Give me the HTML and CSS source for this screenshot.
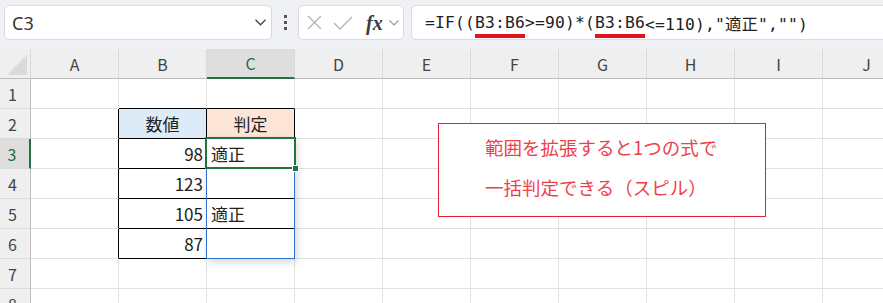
FILE: index.html
```html
<!DOCTYPE html>
<html lang="ja">
<head>
    <meta charset="UTF-8">
    <title>スピル 判定</title>
    <link rel="stylesheet" href="styles.css">
</head>
<body>
    <div class="toolbar">
        <div class="namebox">
            <span>C3</span>
            <svg width="11" height="7" viewBox="0 0 11 7"><polyline points="0.5,0.8 5.5,5.8 10.5,0.8" fill="none" stroke="#444" stroke-width="1.3"/></svg>
        </div>
        <div class="kebab"><i></i><i></i><i></i></div>
        <div class="fxbox">
            <svg class="ic-x" width="15" height="15" viewBox="0 0 15 15"><path d="M1 1L14 14M14 1L1 14" stroke="#b4b4b4" stroke-width="1.4"/></svg>
            <svg class="ic-ok" width="20" height="14" viewBox="0 0 20 14"><polyline points="1,7 7,13 19,1" fill="none" stroke="#b4b4b4" stroke-width="1.4"/></svg>
            <span class="fx">fx</span>
            <svg class="ic-dd" width="10" height="6" viewBox="0 0 10 6"><polyline points="0.5,0.5 5,5 9.5,0.5" fill="none" stroke="#999" stroke-width="1.1"/></svg>
        </div>
        <div class="formula">=IF((<span class="mark">B3:B6</span>&gt;=90)*(<span class="mark">B3:B6</span>&lt;=110),"適正","")</div>
    </div>

    <div class="sheet">
        <div class="grid">
            <!-- column headers -->
            <div class="ch corner"><svg width="20" height="20" viewBox="0 0 20 20"><polygon points="20,0 20,20 0,20" fill="#dadada"/></svg></div>
            <div class="ch">A</div>
            <div class="ch">B</div>
            <div class="ch sel">C</div>
            <div class="ch">D</div>
            <div class="ch">E</div>
            <div class="ch">F</div>
            <div class="ch">G</div>
            <div class="ch">H</div>
            <div class="ch">I</div>
            <div class="ch">J</div>

            <!-- row 1 -->
            <div class="rh">1</div>
            <div></div>
            <div class="bk-b"></div>
            <div class="bk-b"></div>
            <div></div><div></div><div></div><div></div><div></div><div></div><div></div>

            <!-- row 2 -->
            <div class="rh">2</div>
            <div class="bk-r"></div>
            <div class="bk-r bk-b head-blue">数値</div>
            <div class="bk-r bk-b head-peach">判定</div>
            <div></div><div></div><div></div><div></div><div></div><div></div><div></div>

            <!-- row 3 -->
            <div class="rh sel">3</div>
            <div class="bk-r"></div>
            <div class="bk-r bk-b num">98</div>
            <div class="bk-r bk-b">適正</div>
            <div></div><div></div><div></div><div></div><div></div><div></div><div></div>

            <!-- row 4 -->
            <div class="rh">4</div>
            <div class="bk-r"></div>
            <div class="bk-r bk-b num">123</div>
            <div class="bk-r bk-b"></div>
            <div></div><div></div><div></div><div></div><div></div><div></div><div></div>

            <!-- row 5 -->
            <div class="rh">5</div>
            <div class="bk-r"></div>
            <div class="bk-r bk-b num">105</div>
            <div class="bk-r bk-b">適正</div>
            <div></div><div></div><div></div><div></div><div></div><div></div><div></div>

            <!-- row 6 -->
            <div class="rh">6</div>
            <div class="bk-r"></div>
            <div class="bk-r bk-b num">87</div>
            <div class="bk-r bk-b"></div>
            <div></div><div></div><div></div><div></div><div></div><div></div><div></div>

            <!-- row 7 -->
            <div class="rh">7</div>
            <div></div><div></div><div></div><div></div><div></div><div></div><div></div><div></div><div></div><div></div>

            <!-- row 8 -->
            <div class="rh">8</div>
            <div></div><div></div><div></div><div></div><div></div><div></div><div></div><div></div><div></div><div></div>
        </div>

        <!-- spill range and active cell drawn over the grid -->
        <div class="spill"></div>
        <div class="active"></div>
        <div class="handle"></div>

        <div class="note">
            <p>範囲を拡張すると1つの式で</p>
            <p>一括判定できる（スピル）</p>
        </div>
    </div>
</body>
</html>
```

FILE: styles.css
```css
* {
    margin: 0;
    padding: 0;
    box-sizing: border-box;
}

body {
    width: 883px;
    height: 303px;
    overflow: hidden;
    background: #fff;
    font-family: "Noto Sans CJK JP", "Noto Sans", sans-serif;
    color: #222;
}

/* formula bar */
.toolbar {
    height: 49px;
    background: #eff1f4;
    display: flex;
    align-items: flex-start;
    padding: 5px 0 0 4px;
}

.namebox,
.fxbox,
.formula {
    height: 35px;
    background: #fff;
    border: 1px solid #d9dbde;
    border-radius: 5px;
    display: flex;
    align-items: center;
}

.namebox {
    width: 268px;
    flex-shrink: 0;
    justify-content: space-between;
    padding: 0 5px 0 7px;
    font-family: "Noto Sans", sans-serif;
    font-size: 18px;
    color: #333;
}

.kebab {
    width: 26px;
    height: 35px;
    flex-shrink: 0;
    display: flex;
    flex-direction: column;
    align-items: center;
    justify-content: center;
    gap: 3px;
}

.kebab i {
    display: block;
    width: 3px;
    height: 3px;
    background: #555;
}

.fxbox {
    width: 106px;
    flex-shrink: 0;
    padding-left: 8px;
}

.ic-ok {
    margin-left: 11px;
}

.fx {
    margin-left: 13px;
    font-family: "Liberation Serif", serif;
    font-style: italic;
    font-weight: bold;
    font-size: 20px;
    color: #3a3a3a;
    line-height: 1;
}

.ic-dd {
    margin-left: 6px;
}

.formula {
    flex: 1;
    margin: 0 -12px 0 7px;
    padding-left: 13px;
    font-family: "DejaVu Sans Mono", "Noto Sans CJK JP", monospace;
    font-size: 16.3px;
    letter-spacing: 0.2px;
    color: #222;
    white-space: pre;
}

.mark {
    text-decoration: underline;
    text-decoration-color: #e3131b;
    text-decoration-thickness: 4px;
    text-underline-offset: 6px;
}

/* worksheet */
.sheet {
    position: relative;
}

.grid {
    display: grid;
    grid-template-columns: 31px repeat(10, 88px);
    grid-template-rows: repeat(9, 30px);
}

.grid > div {
    border-right: 1px solid #e1e1e1;
    border-bottom: 1px solid #e1e1e1;
    display: flex;
    align-items: center;
    padding: 0 4px;
    font-size: 17px;
}

.grid .ch {
    background: #efefef;
    justify-content: center;
    border-right-color: #d9d9d9;
    border-bottom-color: #bdbdbd;
    color: #444;
    font-size: 16px;
}

.grid .corner {
    justify-content: flex-end;
    align-items: flex-end;
    padding: 0 3px 3px 0;
}

.grid .rh {
    background: #efefef;
    justify-content: center;
    padding: 0 5px 0 0;
    border-right-color: #bdbdbd;
    border-bottom-color: #dadada;
    color: #444;
    font-size: 16px;
}

.grid .ch.sel {
    background: #dedede;
    color: #1d6b40;
    border-bottom: 2px solid #217346;
}

.grid .rh.sel {
    background: #dedede;
    color: #1d6b40;
    border-right: 2px solid #217346;
}

.grid .bk-r {
    border-right-color: #000;
}

.grid .bk-b {
    border-bottom-color: #000;
}

.grid .head-blue {
    background: #ddebf7;
    justify-content: center;
}

.grid .head-peach {
    background: #fce4d6;
    justify-content: center;
}

.grid .num {
    justify-content: flex-end;
    padding-right: 3px;
}

.spill {
    position: absolute;
    left: 206px;
    top: 89px;
    width: 89px;
    height: 121px;
    border: 1px solid #3170d3;
    box-shadow: 2px 3px 8px rgba(0, 0, 0, 0.16);
}

.active {
    position: absolute;
    left: 205px;
    top: 88px;
    width: 91px;
    height: 32px;
    border: 2px solid #217346;
}

.handle {
    position: absolute;
    left: 292px;
    top: 116px;
    width: 7px;
    height: 7px;
    background: #217346;
    border: 1px solid #fff;
}

.note {
    position: absolute;
    left: 438px;
    top: 74px;
    width: 328px;
    height: 94px;
    background: #fff;
    border: 1px solid #e4202e;
    padding: 3px 0 0 46px;
    color: #ee3f4d;
    font-size: 18.5px;
    line-height: 40px;
}
```
